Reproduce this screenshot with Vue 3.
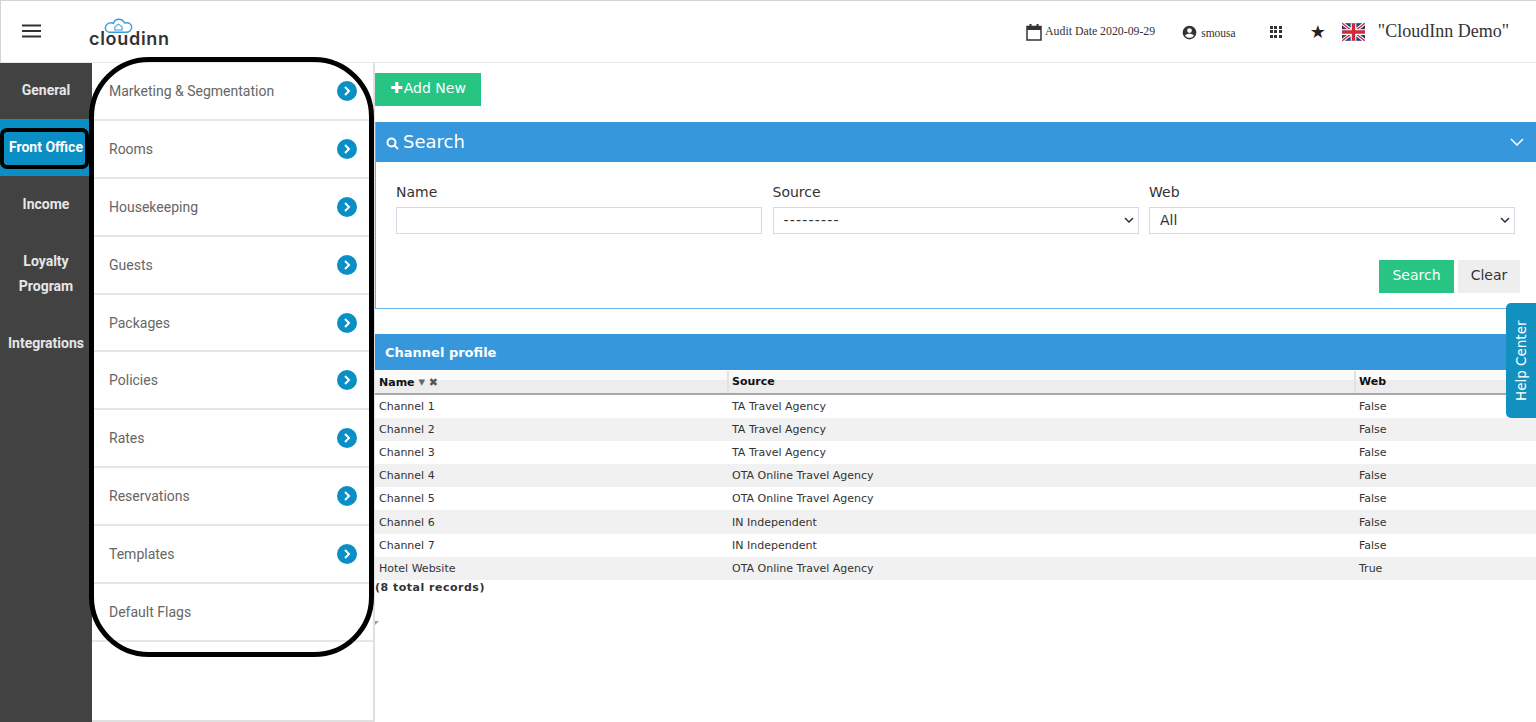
<template>
  <div class="page">
    <header class="topbar">
      <div class="topbar-left">
        <svg class="burger" width="20" height="14" viewBox="0 0 20 14">
          <path d="M0 1.500h19M0 7h19M0 12.500h19" stroke="#333" stroke-width="2" fill="none" />
        </svg>
        <div class="logo">
          <svg class="logo-cloud" width="29" height="16" viewBox="0 0 32 17">
            <path d="M7 15.500h17c4 0 6.500-2.500 6.500-5.500s-2.500-5-5.500-5c-.8 0-1.500.2-2 .4C21.500 2.800 19 1 16.500 1c-3 0-5.500 2-6 4.600C9.800 5.200 9 5 8 5c-3.500 0-6.500 2.300-6.500 5.300 0 2.900 2.300 5.200 5.500 5.200z" fill="none" stroke="#3a9fd6" stroke-width="1.600" />
            <path d="M12 13V9.500l4-3 4 3V13z" fill="none" stroke="#3a9fd6" stroke-width="1.200" />
          </svg>
          <span class="logo-text">cloudinn</span>
        </div>
      </div>
      <div class="topbar-right">
        <svg class="top-icon cal" width="16" height="18" viewBox="0 0 16 18">
          <path d="M1 3.500h14v13.500H1z" fill="none" stroke="#333" stroke-width="1.500" />
          <path d="M1 3h14v4H1zM3.500 1h2v3h-2zM10.500 1h2v3h-2z" fill="#333" />
        </svg>
        <span class="audit">Audit Date 2020-09-29</span>
        <svg class="top-icon user" width="15" height="15" viewBox="0 0 24 24">
          <path d="M12 1a11 11 0 1 0 0 22 11 11 0 0 0 0-22zm0 4a3.800 3.800 0 1 1 0 7.600A3.800 3.800 0 0 1 12 5zm0 15.500c-3 0-5.600-1.500-7.100-3.800 1-1.800 4.700-2.700 7.100-2.700s6.100.9 7.100 2.700c-1.500 2.300-4.100 3.800-7.100 3.800z" fill="#333" />
        </svg>
        <span class="username">smousa</span>
        <div class="apps">
          <i v-for="n in 9" :key="n"></i>
        </div>
        <span class="star">★</span>
        <svg class="flag" width="23" height="18" viewBox="0 0 60 46">
          <rect width="60" height="46" fill="#26407c" />
          <path d="M0 0l60 46M60 0L0 46" stroke="#fff" stroke-width="9" />
          <path d="M0 0l60 46M60 0L0 46" stroke="#cf2a3c" stroke-width="3.500" />
          <path d="M30 0v46M0 23h60" stroke="#fff" stroke-width="15" />
          <path d="M30 0v46M0 23h60" stroke="#cf2a3c" stroke-width="9" />
        </svg>
        <span class="hotel">"CloudInn Demo"</span>
      </div>
    </header>

    <div class="body">
      <nav class="sidebar">
        <div v-for="item in sideItems" :key="item" class="side-item" :class="{ active: item === 'Front Office' }">
          {{ item }}
        </div>
      </nav>

      <aside class="submenu">
        <div v-for="(item, i) in subItems" :key="item" class="sub-item">
          <span>{{ item }}</span>
          <span v-if="i < subItems.length - 1" class="arrow">
            <svg width="8" height="10" viewBox="0 0 8 10">
              <path d="M2 1l4 4-4 4" fill="none" stroke="#fff" stroke-width="2" />
            </svg>
          </span>
        </div>
      </aside>

      <main class="main">
        <button class="add-btn"><span class="plus">✚</span>Add New</button>

        <section class="search-panel">
          <div class="search-head">
            <div class="search-title">
              <svg width="13" height="13" viewBox="0 0 13 13">
                <circle cx="5.500" cy="5.500" r="4" fill="none" stroke="#fff" stroke-width="2" />
                <path d="M8.500 8.500l3.500 3.500" stroke="#fff" stroke-width="2" />
              </svg>
              <span>Search</span>
            </div>
            <svg width="14" height="8" viewBox="0 0 14 8">
              <path d="M1 1l6 6 6-6" fill="none" stroke="#fff" stroke-width="1.500" />
            </svg>
          </div>
          <div class="search-fields">
            <div class="field">
              <label>Name</label>
              <div class="input"></div>
            </div>
            <div class="field">
              <label>Source</label>
              <div class="input select">
                <span class="dashes">---------</span>
                <svg width="10" height="6" viewBox="0 0 10 6"><path d="M1 1l4 4 4-4" fill="none" stroke="#333" stroke-width="1.500" /></svg>
              </div>
            </div>
            <div class="field">
              <label>Web</label>
              <div class="input select">
                <span>All</span>
                <svg width="10" height="6" viewBox="0 0 10 6"><path d="M1 1l4 4 4-4" fill="none" stroke="#333" stroke-width="1.500" /></svg>
              </div>
            </div>
          </div>
          <div class="search-actions">
            <button class="btn-search">Search</button>
            <button class="btn-clear">Clear</button>
          </div>
        </section>

        <section class="channels">
          <div class="channels-head">Channel profile</div>
          <table>
            <thead>
              <tr>
                <th class="col-name">Name <span class="sort">▾</span> <span class="sort-x">✖</span></th>
                <th class="col-source">Source</th>
                <th>Web</th>
              </tr>
            </thead>
            <tbody>
              <tr v-for="row in rows" :key="row.name">
                <td>{{ row.name }}</td>
                <td>{{ row.source }}</td>
                <td>{{ row.web }}</td>
              </tr>
            </tbody>
          </table>
          <div class="total">(8 total records)</div>
        </section>
      </main>
    </div>

    <!-- hand drawn marks on top of the screenshot -->
    <div class="mark mark-sub"></div>
    <div class="mark mark-front"></div>
    <div class="grip"></div>
    <div class="help">Help Center</div>
  </div>
</template>

<script setup>
const sideItems = ["General", "Front Office", "Income", "Loyalty Program", "Integrations"];

const subItems = [
  "Marketing & Segmentation",
  "Rooms",
  "Housekeeping",
  "Guests",
  "Packages",
  "Policies",
  "Rates",
  "Reservations",
  "Templates",
  "Default Flags",
];

const rows = [
  { name: "Channel 1", source: "TA Travel Agency", web: "False" },
  { name: "Channel 2", source: "TA Travel Agency", web: "False" },
  { name: "Channel 3", source: "TA Travel Agency", web: "False" },
  { name: "Channel 4", source: "OTA Online Travel Agency", web: "False" },
  { name: "Channel 5", source: "OTA Online Travel Agency", web: "False" },
  { name: "Channel 6", source: "IN Independent", web: "False" },
  { name: "Channel 7", source: "IN Independent", web: "False" },
  { name: "Hotel Website", source: "OTA Online Travel Agency", web: "True" },
];
</script>

<style>
html,
body {
  margin: 0;
  background: #fff;
  overflow: hidden;
}
</style>

<style scoped>
.page {
  position: relative;
  width: 1536px;
  height: 722px;
  overflow: hidden;
  font-family: "DejaVu Sans", sans-serif;
  color: #333;
  box-sizing: border-box;
}

.topbar {
  height: 63px;
  box-sizing: border-box;
  border-top: 1px solid #d4d4d4;
  border-left: 1px solid #d4d4d4;
  border-bottom: 1px solid #e8e8e8;
  display: flex;
  justify-content: space-between;
  align-items: center;
}

.topbar-left {
  display: flex;
  align-items: center;
  padding-left: 21px;
}

.burger {
  margin-right: 47px;
  margin-top: -1px;
}

.logo {
  display: flex;
  flex-direction: column;
  align-items: flex-start;
  width: 82px;
  margin-top: 2px;
}

.logo-cloud {
  margin-bottom: -4px;
  margin-left: 15px;
}

.logo-text {
  font-family: Inter, sans-serif;
  font-size: 18px;
  line-height: 18px;
  color: #333;
  font-weight: 600;
  letter-spacing: 0.7px;
}

.topbar-right {
  display: flex;
  align-items: center;
  font-family: "Liberation Serif", serif;
  padding-right: 27px;
}

.cal {
  margin-right: 3px;
  margin-left: -1px;
}

.audit {
  font-size: 11.800px;
  margin-right: 27px;
}

.user {
  margin-right: 4px;
  margin-top: 1px;
}

.username {
  font-size: 11.500px;
  margin-right: 34px;
  margin-top: 2px;
}

.apps {
  display: grid;
  grid-template-columns: repeat(3, 3px);
  gap: 1.500px;
  margin-right: 28px;
}

.apps i {
  width: 3px;
  height: 3px;
  background: #333;
}

.star {
  font-family: "DejaVu Sans", sans-serif;
  font-size: 18px;
  margin-right: 16px;
  color: #222;
}

.flag {
  margin-right: 13px;
}

.hotel {
  font-size: 18px;
  color: #333;
}

.body {
  display: flex;
  height: 659px;
}

.sidebar {
  width: 92px;
  flex-shrink: 0;
  background: #424242;
  font-family: Roboto, sans-serif;
  font-weight: 700;
  font-size: 14px;
  color: #e6e6e6;
  text-align: center;
}

.side-item {
  box-sizing: border-box;
  padding: 16px 4px;
  line-height: 25px;
}

.side-item:first-child {
  padding: 15px 4px;
  height: 56px;
}

.side-item.active {
  background: #0a8fc4;
  color: #fff;
}

.submenu {
  width: 283px;
  flex-shrink: 0;
  box-sizing: border-box;
  border-right: 2px solid #e0e0e0;
  border-bottom: 2px solid #e0e0e0;
  font-family: Roboto, sans-serif;
  font-size: 14px;
  color: #666;
}

.sub-item {
  height: 57.900px;
  box-sizing: border-box;
  border-bottom: 2px solid #e6e6e6;
  display: flex;
  align-items: center;
  justify-content: space-between;
  padding: 0 16px 0 17px;
}

.arrow {
  width: 20px;
  height: 20px;
  border-radius: 50%;
  background: #0a8fc4;
  display: flex;
  align-items: center;
  justify-content: center;
}

.main {
  flex: 1;
  min-width: 0;
}

.add-btn {
  display: block;
  margin-top: 10px;
  width: 106px;
  height: 33px;
  border: none;
  background: #28c483;
  color: #fff;
  font-family: "DejaVu Sans", sans-serif;
  font-size: 14px;
  padding: 0 0 3px;
}

.plus {
  font-size: 15px;
  margin-right: 1px;
}

.search-panel {
  margin-top: 16px;
  height: 187px;
  box-sizing: border-box;
  border-left: 1px solid #6db2e6;
  border-bottom: 1px solid #6db2e6;
}

.search-head {
  height: 40px;
  background: #3697dc;
  color: #fff;
  display: flex;
  align-items: center;
  justify-content: space-between;
  padding: 0 12px 0 10px;
}

.search-title {
  display: flex;
  align-items: center;
  gap: 4px;
  font-size: 18px;
  margin-top: -2px;
}

.search-title svg {
  margin-top: 5px;
}

.search-fields {
  display: grid;
  grid-template-columns: repeat(3, 1fr);
  gap: 10.500px;
  padding: 22px 21px 0 20px;
}

.field label {
  display: block;
  font-size: 14px;
  line-height: 17px;
  margin-bottom: 6px;
}

.input {
  height: 27px;
  box-sizing: border-box;
  border: 1px solid #d5d9e6;
}

.select {
  display: flex;
  align-items: center;
  justify-content: space-between;
  padding: 0 4px 2px 10px;
  font-size: 14px;
}

.dashes {
  letter-spacing: 1.200px;
}

.search-actions {
  display: flex;
  justify-content: flex-end;
  gap: 4px;
  margin-top: 26px;
  padding-right: 16px;
}

.search-actions button {
  height: 33px;
  border: none;
  font-family: "DejaVu Sans", sans-serif;
  font-size: 14px;
  padding: 0 0 4px;
}

.btn-search {
  width: 75px;
  background: #28c483;
  color: #fff;
}

.btn-clear {
  width: 62px;
  background: #eee;
  color: #333;
}

.channels {
  margin-top: 25px;
}

.channels-head {
  height: 36px;
  background: #3697dc;
  color: #fff;
  font-weight: 700;
  font-size: 13px;
  line-height: 37px;
  padding-left: 10px;
}

table {
  width: 100%;
  border-collapse: collapse;
  table-layout: fixed;
  font-size: 11px;
  margin-top: 1px;
}

th {
  height: 23px;
  box-sizing: border-box;
  background: linear-gradient(#fafafa 40%, #ededed 40%);
  border-bottom: 2px solid #a8a8a8;
  border-right: 2px solid #e2e2e2;
  text-align: left;
  padding: 0 3px 1px 3px;
  color: #111;
  font-size: 11px;
}

th.col-name {
  padding-left: 4px;
}

th:last-child {
  border-right: none;
}

.col-name {
  width: 353px;
}

.col-source {
  width: 627px;
}

.sort {
  color: #666;
  font-size: 13px;
}

.sort-x {
  color: #555;
  font-size: 11px;
}

td {
  height: 23.100px;
  padding: 0 4px;
  color: #333;
}

tbody tr:nth-child(even) td {
  background: #f1f1f1;
}

.total {
  font-weight: 700;
  font-size: 11px;
  line-height: 15px;
  color: #333;
  letter-spacing: 0.500px;
}

.mark {
  position: absolute;
  box-sizing: border-box;
  border: 5px solid #000;
  pointer-events: none;
}

.mark-sub {
  left: 89px;
  top: 57px;
  width: 285px;
  height: 600px;
  border-radius: 60px;
}

.mark-front {
  left: 0;
  top: 128px;
  width: 89px;
  height: 41px;
  border-width: 4px;
  border-radius: 7px;
}

.grip {
  position: absolute;
  left: 375px;
  top: 621px;
  width: 0;
  height: 0;
  border-top: 4px solid #999;
  border-right: 4px solid transparent;
}

.help {
  position: absolute;
  left: 1506px;
  top: 303px;
  width: 30px;
  height: 115px;
  background: #1290c0;
  color: #fff;
  font-family: "DejaVu Sans", sans-serif;
  font-size: 13.500px;
  writing-mode: vertical-rl;
  transform: rotate(180deg);
  border-radius: 0 5px 5px 0;
  text-align: center;
  line-height: 30px;
}
</style>
